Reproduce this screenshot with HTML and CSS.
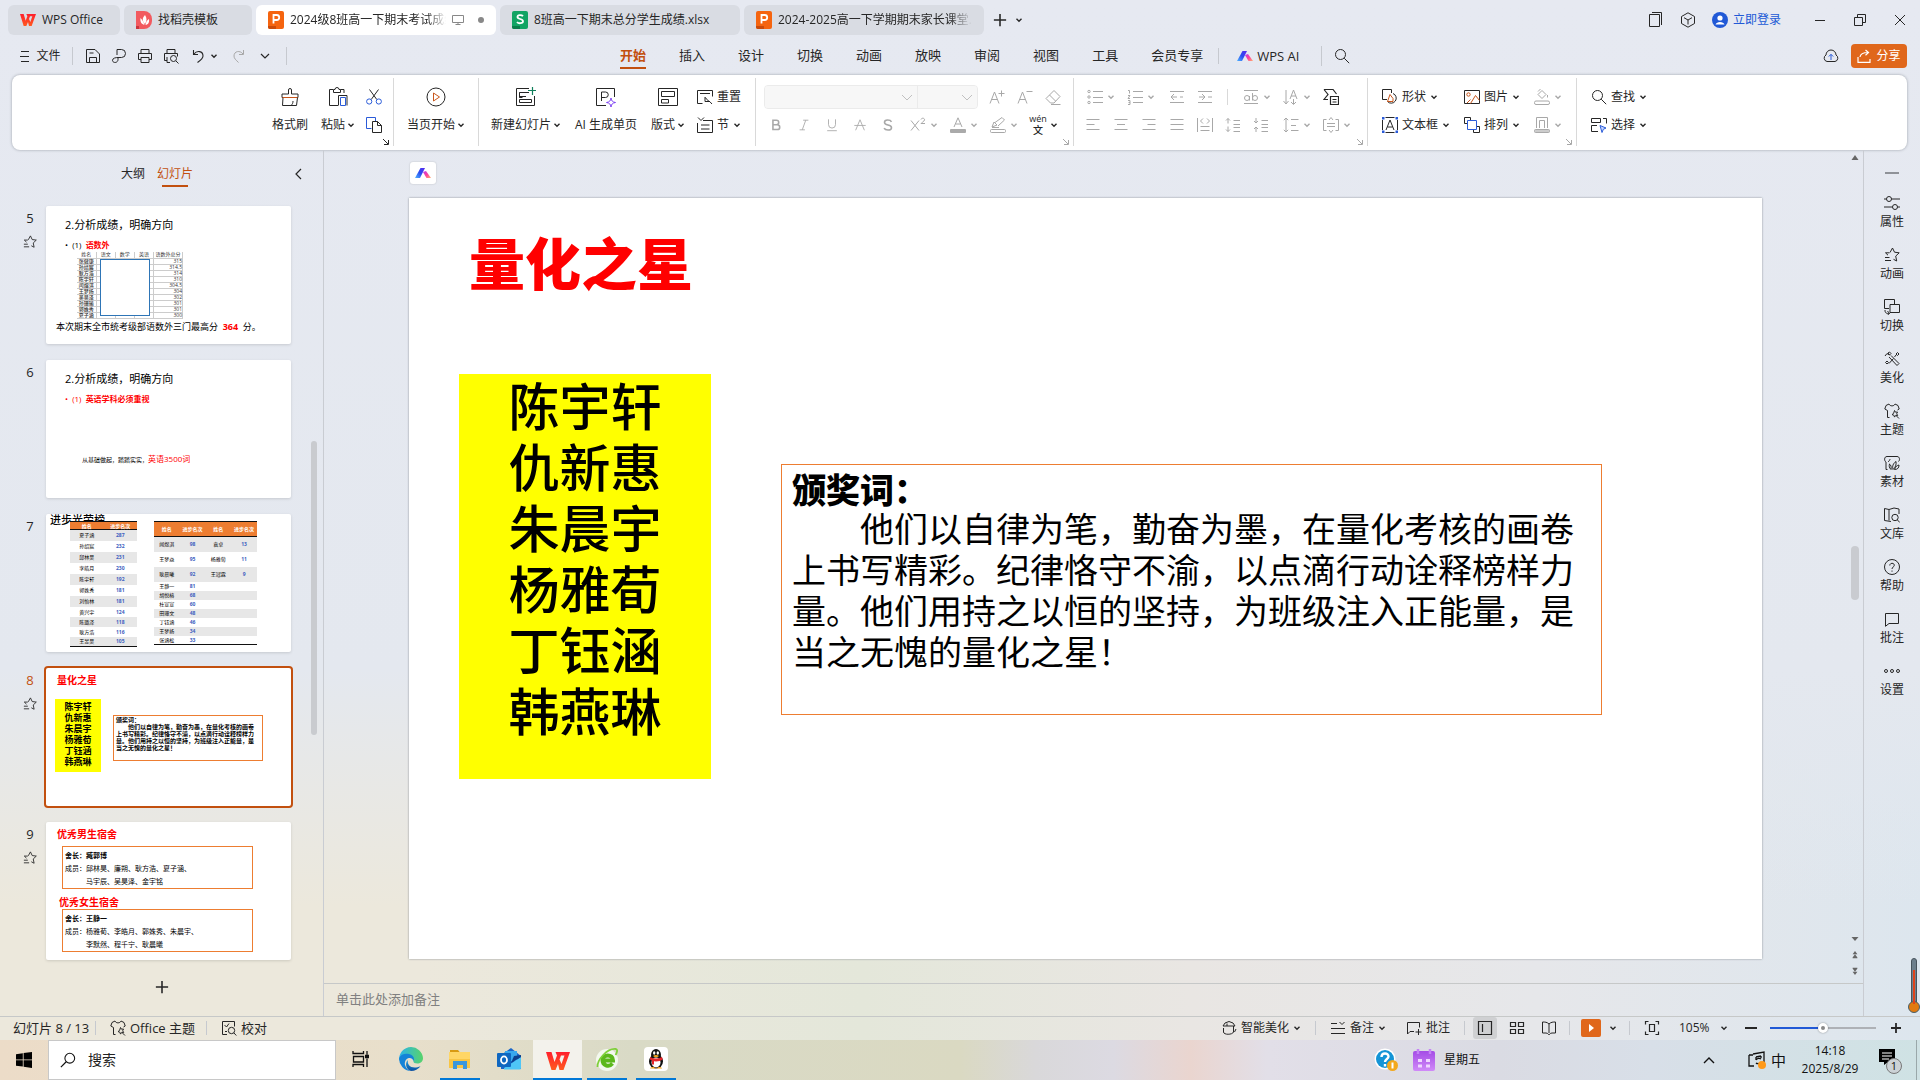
FILE: index.html
```html
<!DOCTYPE html>
<html lang="zh-CN">
<head>
<meta charset="utf-8">
<title>WPS Office</title>
<link rel="stylesheet" href="styles.css">
</head>
<body>
<svg class="sprite" aria-hidden="true">
  <defs>
    <linearGradient id="aiBlue" x1="0" y1="1" x2="1" y2="0"><stop offset="0" stop-color="#4fb4ff"/><stop offset=".5" stop-color="#2a4cf0"/><stop offset="1" stop-color="#5a2af0"/></linearGradient>
    <linearGradient id="aiPink" x1="0" y1="0" x2="1" y2="1"><stop offset="0" stop-color="#b23cf5"/><stop offset=".5" stop-color="#ff3f9c"/><stop offset="1" stop-color="#ffb070"/></linearGradient>
    <linearGradient id="wpsRed" x1="0" y1="0" x2="0" y2="1"><stop offset="0" stop-color="#ff1f2c"/><stop offset="1" stop-color="#ff5a1f"/></linearGradient>
    <linearGradient id="edgeBlue" x1="0" y1="0" x2="0" y2="1"><stop offset="0" stop-color="#1b9de2"/><stop offset="1" stop-color="#0c4fa0"/></linearGradient>
    <linearGradient id="edgeTeal" x1="0" y1="0" x2="1" y2="0"><stop offset="0" stop-color="#2bb3ea"/><stop offset="1" stop-color="#58d36a"/></linearGradient>
    <linearGradient id="calPurple" x1="0" y1="0" x2="0" y2="1"><stop offset="0" stop-color="#a44ce6"/><stop offset="1" stop-color="#d08af8"/></linearGradient>
  </defs>
  <symbol id="chev" viewBox="0 0 8 8"><path d="M1.500 2.800 4 5.200 6.500 2.800" stroke-width="1.400"/></symbol>
  <symbol id="chevL" viewBox="0 0 10 10"><path d="M1 3l4 4 4-4" stroke-width="1.200"/></symbol>
  <symbol id="launch" viewBox="0 0 8 8"><path d="M1 1l5 5M6.500 2v4.500H2"/></symbol>
  <symbol id="wps" viewBox="0 0 24 20"><path d="M0 1h5.500l3 10L11 4.500 9.500 1H24l-6.500 18h-4L12 13l-2.500 6h-4zM15 4.500l-1.500 4 2 4.500 3-8.500z" fill="url(#wpsRed)" fill-rule="evenodd" stroke="none"/></symbol>
  <symbol id="docer" viewBox="0 0 16 18"><path d="M0 0h8a8 8 0 0 1 8 8v2a8 8 0 0 1-8 8H0z" fill="#f25a5f" stroke="none"/><path d="M0 15h3v3H0z" fill="#c9353d" stroke="none"/><path d="M9 4c-3 3-3 6 0 9 2-3 2-6 0-9zM4.500 7c-.5 4 1 6 4 7-1-3-2-5-4-7zM13 8c-2 1-3 3-3.500 6 3-.5 4-3 3.500-6z" fill="#fff" stroke="none"/></symbol>
  <symbol id="ppt" viewBox="0 0 16 18"><rect width="16" height="18" rx="2" fill="#f5640f" stroke="none"/><path d="M0 15h8v3H2a2 2 0 0 1-2-2z" fill="#c94a0a" stroke="none"/><path d="M5.500 12.500V4h3.200a2.400 2.400 0 0 1 0 5H5.500" stroke="#fff" stroke-width="1.800"/></symbol>
  <symbol id="xls" viewBox="0 0 16 18"><rect width="16" height="18" rx="2" fill="#12a464" stroke="none"/><path d="M0 15h8v3H2a2 2 0 0 1-2-2z" fill="#0a7d4a" stroke="none"/><path d="M11 5.200C9.500 3.600 5.500 3.700 5.500 6c0 2.500 5.500 1.500 5.500 4.200 0 2.500-4.500 2.600-6 .8" stroke="#fff" stroke-width="1.800"/></symbol>
  <symbol id="screen" viewBox="0 0 12 12"><path d="M.5 1.500h11v7H.5zM3.500 10.500h5M6 8.500v2"/></symbol>
  <symbol id="plus" viewBox="0 0 16 16"><path d="M8 1v14M1 8h14" stroke-width="1.800"/></symbol>
  <symbol id="windows" viewBox="0 0 16 16"><path d="M1.500 2.500h10v12h-10zM4 .5h9.500V13"/></symbol>
  <symbol id="cube" viewBox="0 0 16 16"><path d="M8 .8l6.500 3.700v7L8 15.200 1.500 11.500v-7zM4 5.700l4 2.300 4-2.300M8 8v4.500"/></symbol>
  <symbol id="user" viewBox="0 0 16 16"><circle cx="8" cy="8" r="8" fill="#2159d6" stroke="none"/><circle cx="8" cy="6" r="2.600" fill="#fff" stroke="none"/><path d="M3.500 12.500C4.500 9 11.500 9 12.500 12.500z" fill="#fff" stroke="none"/></symbol>
  <symbol id="min" viewBox="0 0 12 12"><path d="M1 6.500h10"/></symbol>
  <symbol id="restore" viewBox="0 0 12 12"><path d="M.5 3.500h8v8h-8zM3.500 3V.5h8v8H9"/></symbol>
  <symbol id="close" viewBox="0 0 12 12"><path d="M1 1l10 10M11 1L1 11"/></symbol>
  <symbol id="burger" viewBox="0 0 10 12"><path d="M1 1.500h8M0 6.500h9M1 11.500h8"/></symbol>
  <symbol id="save" viewBox="0 0 16 16"><path d="M1.500 1.500h8.500l4.500 4.500v8.500h-13zM4.500 14.500v-5h7v5M4.500 5h4"/></symbol>
  <symbol id="export" viewBox="0 0 16 16"><path d="M6 7V1.500h4.500a4 4 0 0 1 0 8H7c-2 0-5.500.5-5.500 2.800 0 3 5.500 3 5.500-.8V9"/></symbol>
  <symbol id="print" viewBox="0 0 16 16"><path d="M4 5V1.500h8V5M4 11.500H1.500v-6h13v6H12M4 9.500h8v5H4z"/></symbol>
  <symbol id="preview" viewBox="0 0 16 16"><path d="M4 5V1.500h8V5M4 12.500H1.500v-7h13v3M4 9v5.500h3"/><circle cx="10.500" cy="10.500" r="3"/><path d="M13 13l2.500 2.500"/></symbol>
  <symbol id="undo" viewBox="0 0 16 16"><path d="M3.500 2v4.500h4.500M4 6c3-4 9-3 9 2 0 2.500-2 4-5.500 6.500" stroke-width="1.100"/></symbol>
  <symbol id="redo" viewBox="0 0 16 16"><path d="M12.500 2v4.500H8M12 6C9 2 3 3 3 8c0 2.500 2 4 4.500 6.500"/></symbol>
  <symbol id="search" viewBox="0 0 16 16"><circle cx="6.500" cy="6.500" r="5"/><path d="M10.200 10.200l5 5"/></symbol>
  <symbol id="ai" viewBox="0 0 16 12"><path d="M5.500 1h4.500L5 11H0z" fill="url(#aiBlue)" stroke="none"/><path d="M8 5l3-1 5 7h-4.500z" fill="url(#aiPink)" stroke="none"/></symbol>
  <symbol id="cloud" viewBox="0 0 16 16"><path d="M4 13.500a3.500 3.500 0 0 1-1-6.500 5 5 0 0 1 10 0 3.500 3.500 0 0 1-1 6.500z"/><path d="M8 12V6.500M5.800 8.500L8 6.300l2.200 2.200" stroke="#2a5bd8"/></symbol>
  <symbol id="share" viewBox="0 0 14 14"><path d="M1 8v5.300h12V10M3 8c.5-3.500 3-4.500 8-4.500M8.500 1l3 2.600-3 2.600" stroke-width="1.200"/></symbol>
  <symbol id="brush" viewBox="0 0 20 20"><path d="M8.500 7V3a1.500 1.500 0 0 1 3 0v4h6.500v3.500H2V7zM3 10.500L2.500 18.500h14l1-8M13 14c0 2-.5 3-2 4.500"/><path d="M2.500 10.500h15" stroke="#c8561b"/></symbol>
  <symbol id="paste" viewBox="0 0 20 20"><path d="M5 2.500H1.500v16H10M12.500 2.500H16V6M5.500 2.500h1.500a2 2 0 0 1 4 0h1.500v3h-7z"/><path d="M12.500 10.500h5v8h-5z" stroke="#2a5bd8"/><path d="M10.500 18.500V8.500h8.500v10"/></symbol>
  <symbol id="cut" viewBox="0 0 16 16"><path d="M3.500.5l7.300 10M12.500.5L5.200 10.500"/><g stroke="#2a5bd8"><circle cx="3.200" cy="12.500" r="2.600"/><circle cx="12.800" cy="12.500" r="2.600"/></g></symbol>
  <symbol id="copy" viewBox="0 0 16 16"><path d="M5.500 11.500H.5V.5h9V4" stroke="#2a5bd8"/><path d="M6.500 4.500h5l4 4v7h-9zM11.500 4.500v4h4"/></symbol>
  <symbol id="play" viewBox="0 0 20 20"><circle cx="10" cy="10" r="9"/><path d="M7.500 6l6 4-6 4z" stroke="#c8561b"/></symbol>
  <symbol id="newslide" viewBox="0 0 20 20"><path d="M13 1.500H.5v17h18V9M13 5.500H3.500v5h3M3.500 5.500v5M10 9.500H3.500M3.500 12.500h12v3h-12z"/><path d="M16.500 0v8M12 3.500h8" stroke="#12805c" stroke-width="1.200"/></symbol>
  <symbol id="aislide" viewBox="0 0 20 20"><path d="M10 18.500H.5V1.500h18V10M5.500 14V5h4a2.700 2.700 0 0 1 0 5.500h-4"/><path d="M15 11c.5 3 1.500 4 4.500 4.500-3 .5-4 1.500-4.500 4.500-.5-3-1.500-4-4.500-4.500 3-.5 4-1.500 4.500-4.500z" stroke="#7b3ff2"/></symbol>
  <symbol id="layout" viewBox="0 0 20 20"><path d="M.5 1.500h19v17H.5zM3.500 4.500h13v5h-13zM3.500 12.500h7v3.500h-7z"/></symbol>
  <symbol id="reset" viewBox="0 0 16 16"><path d="M5.500 14.500H.5V1.500h15v6M3 4.500h10M8 8v4.500h4.500M8.500 8.500c1 3 4 3 6.500 6.500"/></symbol>
  <symbol id="section" viewBox="0 0 16 16"><path d="M6 3.500h9.500v12H.5V6M1 .5L4 3.500 7 .5M4 8h8.500M4 12h8.500"/></symbol>
  <symbol id="aplus" viewBox="0 0 16 16"><path d="M1 14.500L5.500 3l4.500 11.500M2.500 10.500h6M9.500 4.500h6M12.500 1.500v6"/></symbol>
  <symbol id="aminus" viewBox="0 0 16 16"><path d="M1 14.500L5.500 3l4.500 11.500M2.500 10.500h6M9.500 2.500h6"/></symbol>
  <symbol id="eraser" viewBox="0 0 16 16"><path d="M9 1.500l6 6-6 6.500H5.500L1 9.500zM4.500 6l6 6M6 15.500h9.500"/></symbol>
  <symbol id="bold" viewBox="0 0 16 16"><path d="M4.500 2.500h4a2.600 2.600 0 0 1 0 5.200h-4zM4.500 7.700h5a2.700 2.700 0 0 1 0 5.500h-5z" stroke-width="1.800"/></symbol>
  <symbol id="italic" viewBox="0 0 16 16"><path d="M7 2.500h6M3 13.500h6M10 2.500L6 13.500"/></symbol>
  <symbol id="under" viewBox="0 0 16 16"><path d="M4 1.500v6a4 4 0 0 0 8 0v-6M2.500 14.500h11"/></symbol>
  <symbol id="strike" viewBox="0 0 16 16"><path d="M3 14L8 2l5 12M1.500 8.500h13"/></symbol>
  <symbol id="shadow" viewBox="0 0 16 16"><path d="M12 4.500C10.500 1.500 4 1.500 4 5c0 4 8 2 8 6 0 3.500-7 3.500-8.500.5" stroke-width="1.800"/></symbol>
  <symbol id="sup" viewBox="0 0 16 16"><path d="M1 3.500l8 10M9 3.500l-8 10M11 2.500c.5-2 4-1.500 3.500.5-.3 1.500-3.500 3-3.500 3.500h4"/></symbol>
  <symbol id="fcolor" viewBox="0 0 16 16"><path d="M4 10L8 .8 12 10M5.500 7h5"/><rect x="0" y="12" width="16" height="4" rx="1" fill="#aaa" stroke="none"/></symbol>
  <symbol id="hilite" viewBox="0 0 16 16"><path d="M2 10l2-5 3 3zM5 5.500L12 .5l2.500 2.500L8 9M2 10.500h7"/><rect x=".5" y="12.500" width="15" height="3" rx="1"/></symbol>
  <symbol id="bullets" viewBox="0 0 16 16"><circle cx="2" cy="2.500" r="1.200"/><circle cx="2" cy="8" r="1.200"/><circle cx="2" cy="13.500" r="1.200"/><path d="M6 2.500h10M6 8.500h10M6 13.500h10"/></symbol>
  <symbol id="numbers" viewBox="0 0 16 16"><path d="M1 1.500h1.500v3M1 6.500h2L1 9.500h2M1 11.500h2v4H1M1.500 13.500H3M6 2.500h10M6 8.500h10M6 13.500h10"/></symbol>
  <symbol id="outdent" viewBox="0 0 14 14"><path d="M0 1.500h14M0 12.500h14M1 7h6M4 4L1 7l3 3M10 7h3"/></symbol>
  <symbol id="indent" viewBox="0 0 14 14"><path d="M0 1.500h14M0 12.500h14M1 7h6M4 4l3 3-3 3M10 7h4"/></symbol>
  <symbol id="abc" viewBox="0 0 16 16"><path d="M1 1.500h14M1 14.500h14M9.500 4v7.500M6.500 7v4.500"/><circle cx="4" cy="9" r="2.500"/><circle cx="12" cy="9" r="2.500"/></symbol>
  <symbol id="vtext" viewBox="0 0 16 16"><path d="M3 1v14M.5 12L3 15l2.500-3M7 10l3.500-9L14 10M8 7h5M10.500 10v5M8 13l2.500 2.500L13 13"/></symbol>
  <symbol id="convert" viewBox="0 0 16 16"><path d="M1 .5h9l3.500 4.500M1 .5l4 5-4 5h4M7.500 7.500h8v8h-8zM9.500 10.500h4M9.500 13h4" stroke-width="1.200"/></symbol>
  <symbol id="alignl" viewBox="0 0 16 16"><path d="M1.500 2.500h13M1.500 7.500h8M1.500 12.500h13"/></symbol>
  <symbol id="alignc" viewBox="0 0 16 16"><path d="M1.500 2.500h13M4 7.500h8M1.500 12.500h13"/></symbol>
  <symbol id="alignr" viewBox="0 0 16 16"><path d="M1.500 2.500h13M6.500 7.500h8M1.500 12.500h13"/></symbol>
  <symbol id="justify" viewBox="0 0 16 16"><path d="M1.500 2.500h13M1.500 7.500h13M1.500 12.500h13"/></symbol>
  <symbol id="distrib" viewBox="0 0 16 16"><path d="M.5 1v14M15.500 1v14M6 1.500L3.500 4 6 6.500M10 1.500L12.500 4 10 6.500M3.500 9.500h9M3.500 13.500h9"/></symbol>
  <symbol id="lsup" viewBox="0 0 16 16"><path d="M3 6.500v-5M1 3.500l2-2 2 2M3 9.500v5M1 12.500l2 2 2-2M8.500 3.500H15M8.500 7.500H15M8.500 10.500H15M8.500 14.500H15"/></symbol>
  <symbol id="lsdown" viewBox="0 0 16 16"><path d="M3 1v5M1 4l2 2 2-2M3 15v-5M1 12l2-2 2 2M8.500 3.500H15M8.500 7.500H15M8.500 10.500H15M8.500 14.500H15"/></symbol>
  <symbol id="lspace" viewBox="0 0 16 16"><path d="M3 1v14M.8 3.200L3 1l2.200 2.200M.8 12.800L3 15l2.200-2.200M8 2.500h7.500M8 8.500h5M8 13.500h7.500"/></symbol>
  <symbol id="valign" viewBox="0 0 16 16"><path d="M3.500 2.500h-3v11h3M12.500 2.500h3v11h-3M4 6.500h8M4 9.500h8M6 3l2-2.500L10 3M6 13l2 2.500 2-2.500"/></symbol>
  <symbol id="shapes" viewBox="0 0 16 16"><path d="M5 10.500H.5V.5h9V4M11 4.500a5 5 0 1 1-5.500 8"/><path d="M5.500 12.500l2.500-7 3 4v3z" stroke="#c8561b"/></symbol>
  <symbol id="textbox" viewBox="0 0 16 16"><path d="M3.500.5h9M3.500 15.500h9M.5 3v10M15.500 3v10M4 13L8 3l4 10M5.500 10h5"/><path d="M0 0h2.500v2.500H0zM13.500 0H16v2.500h-2.500zM0 13.500h2.500V16H0zM13.500 13.500H16V16h-2.500z" fill="#2a5bd8" stroke="none"/></symbol>
  <symbol id="picture" viewBox="0 0 16 16"><path d="M.5 1.500h15v13H.5z"/><g stroke="#c8561b"><circle cx="4.500" cy="5.500" r="1.700"/><path d="M3 14l3.500-3.500M6.500 14.500l5-8 4 5"/></g></symbol>
  <symbol id="arrange" viewBox="0 0 16 16"><path d="M3 6.500H.5V.5h6V3M13 9.500h2.500v6h-6V13"/><path d="M3.500 3.500h9v9h-9z" stroke="#2a5bd8"/></symbol>
  <symbol id="fill" viewBox="0 0 16 16"><path d="M4 5.500L8 1.500l4 4-4 4zM4 2.500L6.500 0M13.500 6v2.500"/><rect x=".5" y="12" width="15" height="3.500" rx="1.500"/></symbol>
  <symbol id="frame" viewBox="0 0 16 16"><path d="M2.500 11V.5h11V11M5.500 11V3.500h5V11"/><rect x=".5" y="12.500" width="15" height="3" rx="1" fill="#ccc" stroke="#aaa"/></symbol>
  <symbol id="select" viewBox="0 0 16 16"><path d="M.5 1.500h9v4h-9zM12 1.500h3.500v5M6 8.500H.5v6H7"/><path d="M9 8.500l6 2.500-2.700 1.300L11 15.500z" stroke="#2a5bd8" fill="#c9d8ff"/></symbol>
  <symbol id="star" viewBox="0 0 16 16"><path d="M6 5.500L8.500 1l2 4.200 4.700.6-3.500 3.300 1 4.900-3.200-1.700M1.500 5.800h4M1.500 5.800L4 8.200M1 10.500h4.500M1 13.500h6"/></symbol>
  <symbol id="props" viewBox="0 0 16 16"><circle cx="5" cy="4" r="2.500"/><circle cx="11" cy="12" r="2.500"/><path d="M0 4h2.500M7.500 4H16M0 12h8.500M13.500 12H16"/></symbol>
  <symbol id="swap" viewBox="0 0 16 16"><path d="M5 9.500H.5V.5h10V5M6 5.500h9.500v8H6zM1 11c0 3 1 3.500 4.500 3.500M3.500 12l2 2.500-2 1.500"/></symbol>
  <symbol id="beauty" viewBox="0 0 16 16"><path d="M5 6l8 8.500 2-2L7 4.500M9.500 7.500L5 12.500M12 4l-1.500 2M1 5l2-2.500L5.500 4M1.500 11.500L3 10l1.500 1.500L3 13zM12 3l1.500-1.500L15 3l-1.500 1.500zM4 2l1.500-1L7 2.500 5.500 4z"/></symbol>
  <symbol id="theme" viewBox="0 0 16 16"><path d="M5.500 14.500H3.500V7.500L.8 6 2 2.500 5 1c1 2.500 5 2.500 6 0l3 1.500L15.200 6l-1.700 1"/><path d="M10.500 7.500l1 1.700 2-.2-.8 1.800 1 1.700-2-.1-1.200 1.700-.6-1.900-1.900-.6 1.600-1.200zM12.500 13l2.500 2.500"/></symbol>
  <symbol id="asset" viewBox="0 0 16 16"><path d="M3.500 14.500H2V7C0 6 0 1.500 3 1.500h10c3 0 3 4 1.500 5M4 7c1-1 2-2 2-3M7 14.500c-2-2-2-3.500-1.500-5.500 1.500 1 2 3 1.500 5.500zM9 14.500c-1-3 0-6 3-8 .5 3-.5 6-3 8zM10.500 14.500c1-3 2.500-4 4.500-4.500 0 3-1.500 4.500-4.500 4.500z"/></symbol>
  <symbol id="library" viewBox="0 0 16 16"><path d="M7 14.500l-6.500-1v-12L5 2.500v11M5 2.500l5-1.500 5 1v5"/><circle cx="11" cy="10.500" r="3.200"/><path d="M13.300 12.800l2.500 2.700"/></symbol>
  <symbol id="help" viewBox="0 0 16 16"><circle cx="8" cy="8" r="7.500"/><path d="M5.800 6.500c0-3 4.500-2.800 4.500-.3C10.300 8 8 8 8 10M8 11.500v1.200"/></symbol>
  <symbol id="comment" viewBox="0 0 16 16"><path d="M1.500 2.500h13v10H5l-3.500 2.800z"/></symbol>
  <symbol id="dots" viewBox="0 0 16 16"><circle cx="2" cy="8" r="1.500"/><circle cx="8" cy="8" r="1.500"/><circle cx="14" cy="8" r="1.500"/></symbol>
  <symbol id="proof" viewBox="0 0 16 16"><path d="M6 14.500H1.500V1.500h12v5M3.500 5l2 2 2.500-3.500M4 11.500h2"/><circle cx="10.500" cy="10.500" r="3.200"/><path d="M12.800 12.800l2.500 2.700"/></symbol>
  <symbol id="smart" viewBox="0 0 16 16"><path d="M2 6l2-3 4-1.500L12 3l2 3zM2.500 8v4c0 3 9 3 10 0V6M13.500 12L15 9M6 6V3.500"/></symbol>
  <symbol id="notes" viewBox="0 0 16 16"><path d="M1 3.500h6M9.500 2l2.500 2.500L14.500 2M1 8.500h14M1 13.500h14"/></symbol>
  <symbol id="addcom" viewBox="0 0 16 16"><path d="M8 11.500H4l-2.500 2.500V2.500h12v5M12.500 9v6M9.500 12h6"/></symbol>
  <symbol id="normal" viewBox="0 0 16 16"><path d="M1.500 1.500h13v13h-13zM5.500 4v8" stroke-width="1.200"/></symbol>
  <symbol id="grid" viewBox="0 0 16 16"><path d="M1.500 2.500h5v4h-5zM9.500 2.500h5v4h-5zM1.500 9.500h5v4h-5zM9.500 9.500h5v4h-5z" stroke-width="1.200"/></symbol>
  <symbol id="read" viewBox="0 0 16 16"><path d="M8 4C6 2 4 2 1.500 2v11H5c2 0 3 2 3 2s1-2 3-2h3.500V2C12 2 10 2 8 4zM8 4v9"/></symbol>
  <symbol id="fit" viewBox="0 0 16 16"><path d="M4.500 1.500h-3v3M11.500 1.500h3v3M4.500 14.500h-3v-3M11.500 14.500h3v-3M5.500 4.500h5v7h-5z" stroke-width="1.200"/></symbol>
</svg>

<div class="app">
  <header class="titlebar">
    <div class="doc-tabs" role="tablist">
      <button class="doc-tab tab-home"><svg class="ic logo"><use href="#wps"/></svg><span>WPS Office</span></button>
      <button class="doc-tab tab-tpl"><svg class="ic"><use href="#docer"/></svg><span>找稻壳模板</span></button>
      <button class="doc-tab tab-doc active"><svg class="ic"><use href="#ppt"/></svg><span class="fade">2024级8班高一下期末考试成绩</span><svg class="ic s12 mute"><use href="#screen"/></svg><i class="dot"></i></button>
      <button class="doc-tab tab-doc"><svg class="ic"><use href="#xls"/></svg><span>8班高一下期末总分学生成绩.xlsx</span></button>
      <button class="doc-tab tab-doc"><svg class="ic"><use href="#ppt"/></svg><span class="fade long">2024-2025高一下学期期末家长课堂.</span></button>
    </div>
    <button class="plain new-tab" aria-label="新建"><svg class="ic s14"><use href="#plus"/></svg></button>
    <button class="plain" aria-label="更多"><svg class="ic s8"><use href="#chev"/></svg></button>
    <div class="win">
      <button class="plain" aria-label="窗口"><svg class="ic s16"><use href="#windows"/></svg></button>
      <button class="plain" aria-label="应用"><svg class="ic s16"><use href="#cube"/></svg></button>
      <button class="plain login"><svg class="ic s16"><use href="#user"/></svg><span>立即登录</span></button>
      <button class="plain winbtn" aria-label="最小化"><svg class="ic s12"><use href="#min"/></svg></button>
      <button class="plain winbtn" aria-label="还原"><svg class="ic s12"><use href="#restore"/></svg></button>
      <button class="plain winbtn" aria-label="关闭"><svg class="ic s12"><use href="#close"/></svg></button>
    </div>
  </header>

  <div class="menubar">
    <div class="quick">
      <button class="plain file"><svg class="ic burger"><use href="#burger"/></svg><span>文件</span></button>
      <i class="vsep"></i>
      <button class="plain q" aria-label="保存"><svg class="ic s16"><use href="#save"/></svg></button>
      <button class="plain q" aria-label="输出"><svg class="ic s16"><use href="#export"/></svg></button>
      <button class="plain q" aria-label="打印"><svg class="ic s16"><use href="#print"/></svg></button>
      <button class="plain q" aria-label="预览"><svg class="ic s16"><use href="#preview"/></svg></button>
      <button class="plain undo" aria-label="撤销"><svg class="ic s16"><use href="#undo"/></svg><svg class="ic s8"><use href="#chev"/></svg></button>
      <button class="plain q gray redo" aria-label="恢复"><svg class="ic s16"><use href="#redo"/></svg></button>
      <button class="plain q" aria-label="自定义"><svg class="ic s10"><use href="#chevL"/></svg></button>
      <i class="vsep last"></i>
    </div>
    <nav class="menu-tabs">
      <a href="#" class="on">开始</a><a href="#">插入</a><a href="#">设计</a><a href="#">切换</a><a href="#">动画</a><a href="#">放映</a><a href="#">审阅</a><a href="#">视图</a><a href="#">工具</a><a href="#">会员专享</a>
    </nav>
    <i class="vsep a"></i>
    <button class="plain wpsai"><svg class="ic ai"><use href="#ai"/></svg><span>WPS AI</span></button>
    <i class="vsep b"></i>
    <button class="plain" aria-label="搜索"><svg class="ic s16"><use href="#search"/></svg></button>
    <div class="menu-right">
      <button class="plain" aria-label="云同步"><svg class="ic s16"><use href="#cloud"/></svg></button>
      <button class="share"><svg class="ic s14"><use href="#share"/></svg><span>分享</span></button>
    </div>
  </div>

  <div class="ribbon">
    <section class="grp g-clip">
      <button class="big w48"><svg class="ic s20"><use href="#brush"/></svg><span>格式刷</span></button>
      <button class="big w48"><svg class="ic s20"><use href="#paste"/></svg><span>粘贴<svg class="ic s8"><use href="#chev"/></svg></span></button>
      <div class="col w24">
        <button class="tool" aria-label="剪切"><svg class="ic s16"><use href="#cut"/></svg></button>
        <button class="tool" aria-label="复制"><svg class="ic s16"><use href="#copy"/></svg></button>
      </div>
      <svg class="ic s8 launcher"><use href="#launch"/></svg>
    </section>
    <section class="grp g-play">
      <button class="big"><svg class="ic s20"><use href="#play"/></svg><span>当页开始<svg class="ic s8"><use href="#chev"/></svg></span></button>
    </section>
    <section class="grp g-slide">
      <button class="big w78"><svg class="ic s20"><use href="#newslide"/></svg><span>新建幻灯片<svg class="ic s8"><use href="#chev"/></svg></span></button>
      <button class="big w78"><svg class="ic s20"><use href="#aislide"/></svg><span>AI 生成单页</span></button>
      <button class="big w42"><svg class="ic s20"><use href="#layout"/></svg><span>版式<svg class="ic s8"><use href="#chev"/></svg></span></button>
      <div class="col side">
        <button class="lab"><svg class="ic s16"><use href="#reset"/></svg><span>重置</span></button>
        <button class="lab"><svg class="ic s16"><use href="#section"/></svg><span>节</span><svg class="ic s8"><use href="#chev"/></svg></button>
      </div>
    </section>
    <section class="grp g-font gray">
      <div class="row">
        <div class="combo"><select class="c-font" aria-label="字体" disabled><option></option></select><select class="c-size" aria-label="字号" disabled><option></option></select></div>
        <button class="tool" aria-label="增大字号"><svg class="ic s16"><use href="#aplus"/></svg></button>
        <button class="tool" aria-label="减小字号"><svg class="ic s16"><use href="#aminus"/></svg></button>
        <button class="tool" aria-label="清除格式"><svg class="ic s16"><use href="#eraser"/></svg></button>
      </div>
      <div class="row">
        <button class="tool" aria-label="加粗"><svg class="ic s14"><use href="#bold"/></svg></button>
        <button class="tool" aria-label="倾斜"><svg class="ic s14"><use href="#italic"/></svg></button>
        <button class="tool" aria-label="下划线"><svg class="ic s14"><use href="#under"/></svg></button>
        <button class="tool" aria-label="删除线"><svg class="ic s14"><use href="#strike"/></svg></button>
        <button class="tool" aria-label="阴影"><svg class="ic s14"><use href="#shadow"/></svg></button>
        <button class="drop" aria-label="上标"><svg class="ic s16"><use href="#sup"/></svg><svg class="ic s8"><use href="#chev"/></svg></button>
        <button class="drop" aria-label="字体颜色"><svg class="ic s16"><use href="#fcolor"/></svg><svg class="ic s8"><use href="#chev"/></svg></button>
        <button class="drop" aria-label="突出显示"><svg class="ic s16"><use href="#hilite"/></svg><svg class="ic s8"><use href="#chev"/></svg></button>
        <button class="drop dark"><span class="pinyin"><span>wén</span><b>文</b></span><svg class="ic s8"><use href="#chev"/></svg></button>
      </div>
      <svg class="ic s8 launcher"><use href="#launch"/></svg>
    </section>
    <section class="grp g-para gray">
      <div class="row">
        <button class="drop" aria-label="项目符号"><svg class="ic s16"><use href="#bullets"/></svg><svg class="ic s8"><use href="#chev"/></svg></button>
        <button class="drop numbering" aria-label="编号"><svg class="ic s16"><use href="#numbers"/></svg><svg class="ic s8"><use href="#chev"/></svg></button>
        <button class="tool" aria-label="减少缩进"><svg class="ic s14"><use href="#outdent"/></svg></button>
        <button class="tool" aria-label="增加缩进"><svg class="ic s14"><use href="#indent"/></svg></button>
        <i class="vsep"></i>
        <button class="drop" aria-label="对齐文本"><svg class="ic s16"><use href="#abc"/></svg><svg class="ic s8"><use href="#chev"/></svg></button>
        <button class="drop" aria-label="文字方向"><svg class="ic s16"><use href="#vtext"/></svg><svg class="ic s8"><use href="#chev"/></svg></button>
        <button class="tool conv dark" aria-label="转智能图形"><svg class="ic s16"><use href="#convert"/></svg></button>
      </div>
      <div class="row">
        <button class="tool" aria-label="左对齐"><svg class="ic s16"><use href="#alignl"/></svg></button>
        <button class="tool" aria-label="居中"><svg class="ic s16"><use href="#alignc"/></svg></button>
        <button class="tool" aria-label="右对齐"><svg class="ic s16"><use href="#alignr"/></svg></button>
        <button class="tool" aria-label="两端对齐"><svg class="ic s16"><use href="#justify"/></svg></button>
        <button class="tool" aria-label="分散对齐"><svg class="ic s16"><use href="#distrib"/></svg></button>
        <button class="tool" aria-label="增大行距"><svg class="ic s16"><use href="#lsup"/></svg></button>
        <button class="tool" aria-label="减小行距"><svg class="ic s16"><use href="#lsdown"/></svg></button>
        <button class="drop" aria-label="行距"><svg class="ic s16"><use href="#lspace"/></svg><svg class="ic s8"><use href="#chev"/></svg></button>
        <button class="drop" aria-label="垂直对齐"><svg class="ic s16"><use href="#valign"/></svg><svg class="ic s8"><use href="#chev"/></svg></button>
      </div>
      <svg class="ic s8 launcher"><use href="#launch"/></svg>
    </section>
    <section class="grp g-draw">
      <button class="lab"><svg class="ic s16"><use href="#shapes"/></svg><span>形状</span><svg class="ic s8"><use href="#chev"/></svg></button>
      <button class="lab"><svg class="ic s16"><use href="#picture"/></svg><span>图片</span><svg class="ic s8"><use href="#chev"/></svg></button>
      <button class="drop gray" aria-label="填充"><svg class="ic s16"><use href="#fill"/></svg><svg class="ic s8"><use href="#chev"/></svg></button>
      <button class="lab"><svg class="ic s16"><use href="#textbox"/></svg><span>文本框</span><svg class="ic s8"><use href="#chev"/></svg></button>
      <button class="lab"><svg class="ic s16"><use href="#arrange"/></svg><span>排列</span><svg class="ic s8"><use href="#chev"/></svg></button>
      <button class="drop gray" aria-label="轮廓"><svg class="ic s16"><use href="#frame"/></svg><svg class="ic s8"><use href="#chev"/></svg></button>
      <svg class="ic s8 launcher gray"><use href="#launch"/></svg>
    </section>
    <section class="grp g-find">
      <button class="lab"><svg class="ic s16"><use href="#search"/></svg><span>查找</span><svg class="ic s8"><use href="#chev"/></svg></button>
      <button class="lab"><svg class="ic s16"><use href="#select"/></svg><span>选择</span><svg class="ic s8"><use href="#chev"/></svg></button>
    </section>
  </div>

  <main class="work">
    <aside class="outline">
      <div class="outline-head">
        <a href="#">大纲</a><a href="#" class="on">幻灯片</a>
        <button class="plain collapse" aria-label="收起"><svg class="ic s12" viewBox="0 0 12 12"><path d="M8 1L3 6l5 5" stroke-width="1.200"/></svg></button>
      </div>
      <ol class="thumbs">
        <li>
          <div class="num"><span>5</span><svg class="ic s14"><use href="#star"/></svg></div>
          <div class="thumb">
            <p class="t-head">2.分析成绩，明确方向</p>
            <p class="t-sub">•&nbsp; (1)&nbsp; <b>语数外</b></p>
            <table class="t-score">
              <tr><th>姓名</th><th>语文</th><th>数学</th><th>英语</th><th>语数外总分</th></tr>
              <tr><td>张健康</td><td></td><td></td><td></td><td>315</td></tr>
              <tr><td>孙靖宸</td><td></td><td></td><td></td><td>314.5</td></tr>
              <tr><td>耿方浩</td><td></td><td></td><td></td><td>314</td></tr>
              <tr><td>陈宇轩</td><td></td><td></td><td></td><td>310</td></tr>
              <tr><td>闫煜淇</td><td></td><td></td><td></td><td>304.5</td></tr>
              <tr><td>王梦扬</td><td></td><td></td><td></td><td>304</td></tr>
              <tr><td>吴昊泽</td><td></td><td></td><td></td><td>302</td></tr>
              <tr><td>孙珊瑜</td><td></td><td></td><td></td><td>301</td></tr>
              <tr><td>郭姝秀</td><td></td><td></td><td></td><td>301</td></tr>
              <tr><td>夏子涵</td><td></td><td></td><td></td><td>300</td></tr>
            </table>
            <div class="t-cover"></div>
            <p class="t-foot">本次期末全市统考级部语数外三门最高分&nbsp; <b>364</b>&nbsp; 分。</p>
          </div>
        </li>
        <li>
          <div class="num"><span>6</span></div>
          <div class="thumb">
            <p class="t-head">2.分析成绩，明确方向</p>
            <p class="t-sub red">•&nbsp; (1)&nbsp; <b>英语学科必须重视</b></p>
            <p class="t-mid">从基础做起，踏踏实实，<span>英语3500词</span></p>
          </div>
        </li>
        <li>
          <div class="num"><span>7</span></div>
          <div class="thumb">
            <p class="t-rank">进步光荣榜</p>
            <table class="t-tab left">
              <tr><th>姓名</th><th>进步名次</th></tr>
              <tr><td>夏子涵</td><td>287</td></tr><tr><td>孙绍宸</td><td>232</td></tr><tr><td>邱林昊</td><td>231</td></tr><tr><td>李皓月</td><td>230</td></tr><tr><td>陈宇轩</td><td>192</td></tr><tr><td>郭姝秀</td><td>181</td></tr><tr><td>刘怡林</td><td>181</td></tr><tr><td>黄兴宇</td><td>124</td></tr><tr><td>陈璐泽</td><td>118</td></tr><tr><td>耿方浩</td><td>116</td></tr><tr><td>王昱昊</td><td>105</td></tr>
            </table>
            <table class="t-tab right">
              <tr class="tall"><th>姓名</th><th>进步名次</th><th>姓名</th><th>进步名次</th></tr>
              <tr class="tall"><td>闻煜淇</td><td>98</td><td>袁卓</td><td>13</td></tr>
              <tr class="tall"><td>王梦焱</td><td>95</td><td>杨雅荀</td><td>11</td></tr>
              <tr class="tall"><td>耿晨曦</td><td>92</td><td>王冠霖</td><td>9</td></tr>
              <tr><td>王静一</td><td>81</td><td></td><td></td></tr><tr><td>胡悦榕</td><td>68</td><td></td><td></td></tr><tr><td>杜宣宣</td><td>60</td><td></td><td></td></tr><tr><td>田珊文</td><td>48</td><td></td><td></td></tr><tr><td>丁钰涵</td><td>46</td><td></td><td></td></tr><tr><td>王梦扬</td><td>34</td><td></td><td></td></tr><tr><td>张涵松</td><td>33</td><td></td><td></td></tr>
            </table>
          </div>
        </li>
        <li class="current">
          <div class="num"><span>8</span><svg class="ic s14"><use href="#star"/></svg></div>
          <div class="thumb">
            <p class="t-title">量化之星</p>
            <p class="t-names">陈宇轩<br>仇新惠<br>朱晨宇<br>杨雅荀<br>丁钰涵<br>韩燕琳</p>
            <div class="t-award"><b>颁奖词：</b><p>他们以自律为笔，勤奋为墨，在量化考核的画卷上书写精彩。纪律恪守不渝，以点滴行动诠释榜样力量。他们用持之以恒的坚持，为班级注入正能量，是当之无愧的量化之星！</p></div>
          </div>
        </li>
        <li>
          <div class="num"><span>9</span><svg class="ic s14"><use href="#star"/></svg></div>
          <div class="thumb dorms">
            <p class="t-title boys">优秀男生宿舍</p>
            <p class="t-dorm boys"><b>舍长：臧郭博</b><br>成员：邱林昊、廉朔、耿方浩、夏子涵、<br>　　　马宇辰、吴昊泽、金宇铭</p>
            <p class="t-title girls">优秀女生宿舍</p>
            <p class="t-dorm girls"><b>舍长：王静一</b><br>成员：杨雅荀、李皓月、郭姝秀、朱晨宇、<br>　　　李默然、程千宁、耿晨曦</p>
          </div>
        </li>
      </ol>
      <button class="plain add" aria-label="新建幻灯片"><svg class="ic s14"><use href="#plus"/></svg></button>
      <i class="bar"></i>
    </aside>

    <section class="editor">
      <div class="stage">
        <button class="aibtn" aria-label="AI"><svg class="ic ai"><use href="#ai"/></svg></button>
        <article class="slide">
          <h1>量化之星</h1>
          <p class="names">陈宇轩<br>仇新惠<br>朱晨宇<br>杨雅荀<br>丁钰涵<br>韩燕琳</p>
          <div class="award">
            <h2>颁奖词：</h2>
            <p>他们以自律为笔，勤奋为墨，在量化考核的画卷上书写精彩。纪律恪守不渝，以点滴行动诠释榜样力量。他们用持之以恒的坚持，为班级注入正能量，是当之无愧的量化之星！</p>
          </div>
        </article>
        <div class="vscroll">
          <svg class="tri" viewBox="0 0 8 8"><path d="M4 1l3.500 5h-7z"/></svg>
          <div class="track"><i></i></div>
          <div class="steps">
            <svg class="tri" viewBox="0 0 8 8"><path d="M4 6L.5 2h7z"/></svg>
            <svg class="tri" viewBox="0 0 8 10"><path d="M4 0l3 4H1zM4 4l3 4H1zM1 8h6v1H1z"/></svg>
            <svg class="tri" viewBox="0 0 8 10"><path d="M1 1h6v1H1zM4 6l3-4H1zM4 10l3-4H1z"/></svg>
          </div>
        </div>
      </div>
      <input class="notes" aria-label="备注" placeholder="单击此处添加备注">
    </section>

    <aside class="rail">
      <i class="dash"></i>
      <button><svg class="ic s16"><use href="#props"/></svg><span>属性</span></button>
      <button><svg class="ic s16"><use href="#star"/></svg><span>动画</span></button>
      <button><svg class="ic s16"><use href="#swap"/></svg><span>切换</span></button>
      <button><svg class="ic s16"><use href="#beauty"/></svg><span>美化</span></button>
      <button><svg class="ic s16"><use href="#theme"/></svg><span>主题</span></button>
      <button><svg class="ic s16"><use href="#asset"/></svg><span>素材</span></button>
      <button><svg class="ic s16"><use href="#library"/></svg><span>文库</span></button>
      <button><svg class="ic s16"><use href="#help"/></svg><span>帮助</span></button>
      <button><svg class="ic s16"><use href="#comment"/></svg><span>批注</span></button>
      <button><svg class="ic s16"><use href="#dots"/></svg><span>设置</span></button>
      <svg class="thermo" viewBox="0 0 12 56"><rect x="3.500" y=".5" width="5" height="46" rx="2.500" fill="#6d7f8c" stroke="#47535c"/><circle cx="6" cy="49" r="5.500" fill="#e07a10" stroke="#47606c"/><path d="M6 12v34" stroke="#e0431a" stroke-width="2"/></svg>
    </aside>
  </main>

  <footer class="status">
    <span class="pages">幻灯片 8 / 13</span>
    <i class="vsep"></i>
    <button class="lab th"><svg class="ic s16"><use href="#theme"/></svg><span>Office 主题</span></button>
    <i class="vsep"></i>
    <button class="lab pr"><svg class="ic s16"><use href="#proof"/></svg><span>校对</span></button>
    <div class="status-right">
      <button class="lab"><svg class="ic s16"><use href="#smart"/></svg><span>智能美化</span><svg class="ic s8"><use href="#chev"/></svg></button>
      <i class="vsep"></i>
      <button class="lab"><svg class="ic s16"><use href="#notes"/></svg><span>备注</span><svg class="ic s8"><use href="#chev"/></svg></button>
      <button class="lab com"><svg class="ic s16"><use href="#addcom"/></svg><span>批注</span></button>
      <i class="vsep v2"></i>
      <button class="view on" aria-label="普通视图"><svg class="ic s16"><use href="#normal"/></svg></button>
      <button class="view" aria-label="浏览视图"><svg class="ic s16"><use href="#grid"/></svg></button>
      <button class="view" aria-label="阅读视图"><svg class="ic s16"><use href="#read"/></svg></button>
      <i class="vsep v3"></i>
      <button class="playbtn" aria-label="放映"><svg viewBox="0 0 20 18"><path d="M8 5l5 4-5 4z" fill="#fff"/></svg></button>
      <svg class="ic s8"><use href="#chev"/></svg>
      <i class="vsep v4"></i>
      <svg class="ic s16"><use href="#fit"/></svg>
      <label class="pct" for="zoom">105%</label>
      <svg class="ic s8"><use href="#chev"/></svg>
      <button class="plain zb" aria-label="缩小"><svg class="ic s14"><path d="M1 7h12" stroke-width="2"/></svg></button>
      <input id="zoom" type="range" min="0" max="100" value="50">
      <button class="plain zb" aria-label="放大"><svg class="ic s14"><path d="M2 7h10M7 2v10" stroke-width="1.800"/></svg></button>
    </div>
  </footer>

  <div class="taskbar">
    <button class="plain start" aria-label="开始"><svg viewBox="0 0 16 16"><path d="M0 2.200l6.800-1v6.300H0zM7.600 1.100L16 0v7.500H7.600zM0 8.300h6.800v6.300L0 13.700zM7.600 8.300H16V16l-8.400-1.200z"/></svg></button>
    <label class="searchbox"><svg class="ic" viewBox="0 0 18 18"><circle cx="11" cy="7" r="5.500" stroke-width="1.200"/><path d="M7 11L1 17" stroke-width="1.400"/></svg><input aria-label="搜索" placeholder="搜索"></label>
    <button class="task view-task" aria-label="任务视图"><svg class="ic s18" viewBox="0 0 18 18"><path d="M1 1v2.500h10.500V1M1.500 6.500h10v5.500h-10zM1 17v-2.500h10.500V17M15 1v3.500M15 9v8" stroke-width="1.300"/><path d="M13.500 5h3v3h-3z" fill="#111"/></svg></button>
    <button class="task" aria-label="Edge"><svg viewBox="0 0 24 24"><path d="M12 0a12 12 0 0 1 12 11c0 4-3 5.500-5.500 5.500-3 0-4.500-1-4-2.500C15 12 14 8.500 10 8.500 6 8.500 1.500 11 .3 14A12 12 0 0 1 12 0z" fill="url(#edgeTeal)"/><path d="M.2 11C1.500 7.500 6 6 10 7c4 .8 6 4 4.700 7-1-2.500-3-3.500-5-3-3 1-4.500 4-3.700 7 1 3 3 5.500 6 6A12 12 0 0 1 .2 11z" fill="#1483d8"/><path d="M9 13c-1.500 5 4 10 12.500 6.200A12 12 0 0 1 12 24C7 23 5.500 16 9 13z" fill="url(#edgeBlue)"/></svg></button>
    <button class="task run" aria-label="文件资源管理器"><svg viewBox="0 0 24 24"><path d="M2 3h8l2 2.500H2z" fill="#d89a12"/><path d="M1 5h21v16H1z" fill="#ffd666"/><path d="M1 12h21v9H1z" fill="#f8c545"/><path d="M5 22v-8h14v8h-4v-4H9v4z" fill="#3a97dd"/></svg></button>
    <button class="task" aria-label="Outlook"><svg viewBox="0 0 24 24"><path d="M4 8l10-7 10 8v13H4z" fill="#1b66c9"/><path d="M8 4h12v10H8z" fill="#38a7ee"/><path d="M24 10L7 21v1.500h15.500A1.500 1.500 0 0 0 24 21z" fill="#4fc6f7"/><path d="M24 10L14 16l3-7 7-1z" fill="#0e3f8c"/><rect x="0" y="6" width="14" height="14" rx="1" fill="#0f67c0"/><ellipse cx="7" cy="13" rx="3" ry="3.600" fill="none" stroke="#fff" stroke-width="1.800"/></svg></button>
    <button class="task run here" aria-label="WPS"><svg viewBox="0 -2 24 24"><use href="#wps"/></svg></button>
    <button class="task run" aria-label="浏览器"><svg viewBox="0 0 24 24"><circle cx="12" cy="13" r="11" fill="#f3f8ee"/><path d="M17.500 16.500c-4 4.500-10 1.500-10-3.500 0-6 10.500-6.500 10.500.5H8" fill="none" stroke="#5cb81c" stroke-width="4"/><path d="M2.500 20C2 13 12 1 21 2c2 .5 1 4-.5 6" fill="none" stroke="#7fd03a" stroke-width="1.800"/></svg></button>
    <button class="task run" aria-label="QQ"><svg viewBox="0 0 24 24"><rect width="24" height="24" rx="4" fill="#fff"/><ellipse cx="12" cy="14.500" rx="7" ry="7" fill="#111"/><ellipse cx="12" cy="8" rx="5" ry="6" fill="#111"/><ellipse cx="12" cy="15.500" rx="4.500" ry="5" fill="#fff"/><path d="M6 10c4 2 8 2 12 0l.8 2.500C15 15 9 15 6 12.500zM8 13l2 .5v4H8z" fill="#e5262a"/><ellipse cx="10.200" cy="6" rx="1.200" ry="1.700" fill="#fff"/><ellipse cx="13.800" cy="6" rx="1.200" ry="1.700" fill="#fff"/><path d="M9 9c2-1.200 4-1.200 6 0-2 1.600-4 1.600-6 0z" fill="#f5a31a"/><path d="M6 21.500c1-2 5-2 5.500 0zM12.500 21.500c1-2 5-2 5.500 0z" fill="#f5a31a"/></svg></button>
    <div class="tray">
      <button class="plain" aria-label="帮助"><svg class="s24" viewBox="0 0 24 24"><circle cx="11" cy="11" r="10.500" fill="#fff"/><circle cx="11" cy="11" r="9" fill="#1494d6"/><path d="M7.500 9c0-4.500 7-4.500 7-.5C14.500 11 11 11 11 14M11 16v2.500" fill="none" stroke="#fff" stroke-width="2.400"/><circle cx="18.500" cy="17.500" r="5.500" fill="#f3a81c"/><path d="M18.500 14.500v6" stroke="#fff" stroke-width="2"/></svg></button>
      <button class="plain day"><svg class="s24" viewBox="0 0 24 24"><rect x="1" y="3" width="22" height="20" rx="2" fill="url(#calPurple)"/><path d="M6 1v5M18 1v5" stroke="#c583f5" stroke-width="2.500"/><path d="M6 11h4v3H6zM14 11h4v3h-4zM6 16.500h4v3H6zM14 16.500h4v3h-4z" fill="#efd6ff"/></svg><span>星期五</span></button>
      <svg class="ic s12 up" viewBox="0 0 12 12"><path d="M1 9l5-5 5 5" stroke-width="1.400"/></svg>
      <svg class="ic s18 sync" viewBox="0 0 18 18"><path d="M1 4h4M1 4v11h5M5 3l11-2v14M8 6l5-1M8 6v3M13 5v2M8 9c1-2 4-2 5-1M8 12c1 1 4 1 5-1" stroke-width="1.300"/><circle cx="14" cy="14" r="4" fill="#ff9a1a" stroke="none"/></svg>
      <span class="ime">中</span>
      <div class="clock"><span>14:18</span><span>2025/8/29</span></div>
      <button class="plain msg" aria-label="通知"><svg class="s24" viewBox="0 0 24 24"><path d="M1 1h16v13H10l-4 3v-3H1z" fill="#000"/><path d="M4 5h10M4 8h10M4 11h7" stroke="#fff"/></svg><span>1</span></button>
      <i class="edge"></i>
    </div>
  </div>
</div>
</body>
</html>
```

FILE: styles.css
```css
* { box-sizing: border-box; }
body {
  margin: 0;
  font: 12px/16px "Open Sans", "Noto Sans CJK SC", sans-serif;
  color: #262626;
}
p, h1, h2, ol { margin: 0; padding: 0; }
button, input, select { font: inherit; color: inherit; }
button { border: 0; padding: 0; background: none; display: flex; align-items: center; justify-content: center; white-space: nowrap; }
a { color: inherit; text-decoration: none; }
.sprite { position: absolute; width: 0; height: 0; }
.ic { fill: none; stroke: currentColor; stroke-width: 1; flex: none; display: block; }
.s8 { width: 8px; height: 8px; }
.s10 { width: 10px; height: 10px; }
.s12 { width: 12px; height: 12px; }
.s14 { width: 14px; height: 14px; }
.s16 { width: 16px; height: 16px; }
.s18 { width: 18px; height: 18px; }
.s20 { width: 20px; height: 20px; }
.s24 { width: 24px; height: 24px; flex: none; }
.ai { width: 16px; height: 12px; }
.vsep { width: 1px; height: 16px; background: #c6c9cf; flex: none; }
.gray { color: #a8a8a8; }
.dark { color: #262626; }

.app {
  min-height: 100vh;
  display: flex;
  flex-direction: column;
  background:
    linear-gradient(to bottom, #e6e9f1 0, #e4e8ef 62%, #e4e8ef00 84%),
    linear-gradient(to right, #ece8dc 0, #ece8dc 22%, #e4e7da 45%, #e9e6e3 62%, #e6e7ea 80%, #dde6ee 100%);
}

/* title bar */
.titlebar { display: flex; align-items: center; height: 36px; padding: 5px 14px 1px 8px; }
.doc-tabs { display: flex; gap: 4px; }
.doc-tab { height: 30px; padding: 0 12px; gap: 6px; border-radius: 6px; background: #d9dce3; justify-content: flex-start; }
.doc-tab .ic { width: 16px; height: 18px; }
.doc-tab .s12 { width: 12px; height: 12px; }
.doc-tab .logo { width: 16px; height: 14px; }
.doc-tab.active { background: #fff; }
.tab-home { width: 112px; }
.tab-tpl { width: 128px; }
.tab-doc { width: 240px; }
.fade { width: 158px; overflow: hidden; text-align: left; mask-image: linear-gradient(to right, #000 88%, transparent); }
.fade.long { width: 194px; }
.mute { color: #888; }
.dot { width: 6px; height: 6px; border-radius: 50%; background: #888; margin-left: 8px; }
.new-tab { margin: 0 8px 0 9px; }
.win { display: flex; align-items: center; margin-left: auto; gap: 16px; }
.login { gap: 5px; color: #2159d6; }
.winbtn { width: 12px; margin-left: 12px; }
.login + .winbtn { margin-left: 17px; }

/* menu bar */
.menubar { display: flex; align-items: center; height: 39px; padding: 0 13px 0 20px; font-size: 13px; }
.quick { display: flex; align-items: center; width: 600px; }
.file { gap: 7px; font-size: 12px; width: 40px; margin-right: 12px; }
.burger { width: 10px; height: 12px; }
.quick .vsep { margin-right: 7px; height: 18px; }
.q { width: 26px; }
.undo { width: 40px; gap: 4px; margin-right: 2px; }
.redo { margin-right: 0; }
.quick .last { margin: 0 0 0 8px; }
.menu-tabs { display: flex; gap: 33px; }
.menu-tabs a { padding: 4px 0; border-bottom: 2px solid transparent; height: 26px; }
.menu-tabs .on { color: #c2500f; border-color: #c2500f; font-weight: 700; }
.vsep.a { margin: 0 18px 0 15px; }
.wpsai { gap: 4px; }
.vsep.b { margin: 0 12px 0 22px; height: 20px; }
.menu-right { margin-left: auto; display: flex; align-items: center; gap: 12px; }
.share { height: 24px; width: 56px; gap: 5px; border-radius: 4px; background: #e0671b; color: #fff; font-size: 12px; }

/* ribbon */
.ribbon { display: flex; height: 75px; margin: 0 13px 0 12px; padding: 3px 0 4px 254px; background: #fff; border-radius: 8px; box-shadow: 0 0 3px #9aa0a8; }
.grp { position: relative; padding: 5px 0 7px; border-right: 1px solid #d9d9d9; }
.g-clip, .g-play, .g-slide { display: flex; }
.g-clip { width: 128px; }
.g-play { width: 85px; justify-content: center; }
.g-slide { width: 277px; padding-left: 8px; gap: 2px; }
.g-font { width: 318px; padding-left: 6px; }
.g-para { width: 294px; padding-left: 5px; }
.g-draw { width: 209px; padding-left: 14px; display: grid; grid-template-columns: 82px 62px 40px; align-content: start; }
.g-find { border: 0; padding-left: 14px; }
.big { display: grid; grid-template-rows: 28px 28px; justify-items: center; align-items: center; align-self: start; }
.big span { display: flex; align-items: center; gap: 2px; }
.w48 { width: 48px; }
.w78 { width: 78px; }
.w42 { width: 42px; }
.w24 { width: 24px; }
.col { display: flex; flex-direction: column; }
.side { margin-left: 6px; }
.row { display: flex; align-items: center; height: 28px; }
.tool { width: 28px; height: 28px; }
.w24 .tool { width: 24px; }
.drop { width: 40px; height: 28px; padding: 0 4px; }
.drop > :first-child { margin: 0 4px; }
.lab { height: 28px; gap: 4px; justify-content: flex-start; }
.launcher { position: absolute; right: 3px; bottom: 0; }
.combo { display: flex; width: 214px; height: 24px; margin: 0 5px 0 2px; border: 1px solid #ebebeb; border-radius: 4px; background: #f7f7f7; overflow: hidden; }
.combo select {
  appearance: none; border: 0; border-right: 1px solid #ebebeb; opacity: 1;
  background-color: #f7f7f7;
  background-image: linear-gradient(45deg, transparent 44%, #c0c0c0 44% 58%, transparent 58%), linear-gradient(-45deg, transparent 44%, #c0c0c0 44% 58%, transparent 58%);
  background-position: right 10px center, right 5px center;
  background-size: 5px 5px;
  background-repeat: no-repeat;
}
.c-font { width: 153px; }
.combo .c-size { flex: 1; border: 0; }
.drop .pinyin { width: 24px; margin: 0; font-size: 9px; line-height: 10px; display: grid; justify-items: center; }
.pinyin b { font-size: 10px; line-height: 12px; font-weight: 500; }
.numbering { margin-right: 4px; }
.row .vsep { margin: 0 7px 0 8px; background: #d9d9d9; }
.conv { width: 32px; }

/* workspace */
.work { flex: 1; display: flex; min-height: 0; }
.outline { position: relative; width: 324px; border-right: 1px solid #c9ccd2; flex: none; display: flex; flex-direction: column; }
.outline-head { display: flex; height: 56px; padding: 12px 18px 0 121px; gap: 12px; }
.outline-head a { height: 25px; padding-top: 4px; }
.outline-head .on { color: #c2500f; background: linear-gradient(#c2500f, #c2500f) center bottom / 26px 2px no-repeat; }
.collapse { margin-left: auto; height: 24px; }
.thumbs { list-style: none; display: grid; gap: 16px; }
.thumbs li { display: flex; }
.num { width: 46px; padding: 4px 0 0 14px; display: flex; flex-direction: column; align-items: center; gap: 9px; font-size: 13px; }
.current .num { color: #c2500f; }
.current .num svg { color: #262626; }
.thumb { position: relative; width: 245px; height: 138px; background: #fff; border-radius: 2px; box-shadow: 0 1px 3px #0002; overflow: hidden; color: #000; }
.current .thumb { box-shadow: 0 0 0 2px #c2500f; }
.add { margin: 20px auto 0 155px; }
.bar { position: absolute; left: 311px; top: 291px; width: 6px; height: 34%; border-radius: 3px; background: #c9cbcf; }

/* miniature slides */
.thumb > * { position: absolute; white-space: nowrap; }
.t-head { left: 19px; top: 11px; font-size: 11px; }
.t-sub { left: 19px; top: 31px; font-size: 8px; }
.t-sub b, .t-foot b, .t-mid span, .red { color: #f00; }
.t-foot { left: 10px; top: 113px; font-size: 9px; }
.t-mid { left: 36px; top: 91px; font-size: 6px; }
.t-mid span { font-size: 8px; }
.t-score { left: 31px; top: 46px; width: 106px; border-collapse: collapse; table-layout: fixed; font-size: 5px; line-height: 5px; font-weight: 500; color: #333; }
.t-score th { font-weight: 400; }
.t-score td, .t-score th { padding: 0; height: 6px; border: 1px solid #ccc; border-width: 0 1px 1px 0; text-align: center; }
.t-score th:last-child { width: 29px; }
.t-score td:last-child { text-align: right; }
.t-cover { left: 54px; top: 53px; width: 50px; height: 57px; background: #fff; border: 1px solid #2e75b6; }
.t-rank { left: 4px; top: 0; font-size: 11px; font-weight: 500; line-height: 12px; }
.t-tab { border-collapse: collapse; table-layout: fixed; font-size: 5px; line-height: 6px; text-align: center; border: solid #111; border-width: 1px 0; }
.t-tab td, .t-tab th { padding: 0; }
.t-tab th { background: #ed7d31; color: #fff; border-bottom: 1px solid #111; }
.t-tab tr:nth-child(even) { background: #e7e7e7; }
.t-tab td:nth-child(even) { color: #4060c0; font-weight: 700; }
.t-tab.left { left: 24px; top: 7px; width: 67px; }
.t-tab.left tr { height: 11px; }
.t-tab.left tr:first-child { height: 8px; }
.t-tab.left tr:nth-child(n+9) { height: 10px; }
.t-tab.right { left: 108px; top: 7px; width: 103px; }
.t-tab.right tr { height: 9px; }
.t-tab.right .tall { height: 15px; }
.t-title { left: 11px; top: 4px; font-size: 10px; font-weight: 700; color: #f00; }
.t-names { left: 9px; top: 31px; width: 46px; height: 73px; padding-top: 2px; background: #ff0; text-align: center; font-size: 9px; line-height: 11px; font-weight: 700; }
.thumb .t-award { left: 67px; top: 47px; width: 150px; height: 46px; padding: 1px 2px; border: 1px solid #ed7d31; font-size: 6px; line-height: 7px; white-space: normal; }
.t-award b { display: block; }
.t-award p { text-indent: 2em; font-weight: 700; width: 140px; }
.t-dorm { left: 16px; width: 191px; height: 43px; padding: 2px 0 0 2px; border: 1px solid #ed7d31; font-size: 7px; line-height: 13px; }
.t-dorm.boys { top: 24px; }
.t-dorm.girls { top: 87px; }
.t-title.girls { left: 13px; top: 72px; }

/* slide canvas */
.editor { flex: 1; display: flex; flex-direction: column; min-width: 0; }
.stage { flex: 1; position: relative; padding: 12px 101px 24px 85px; }
.aibtn { width: 26px; height: 22px; margin: 0 0 14px 1px; border-radius: 3px; background: #fff; box-shadow: 0 0 2px #0003; }
.slide { position: relative; aspect-ratio: 1353 / 761; background: #fff; box-shadow: 0 0 2px #8b9096; color: #000; }
.slide h1 { position: absolute; left: 60px; top: 31px; font-size: 56px; line-height: 68px; font-weight: 900; color: #f00; }
.names { position: absolute; left: 50px; top: 176px; width: 252px; height: 405px; padding-top: 2px; background: #ff0; text-align: center; font-size: 51px; line-height: 61px; font-weight: 500; }
.award { position: absolute; left: 372px; top: 266px; width: 821px; height: 251px; padding: 7px 10px; border: 1px solid #ed7d31; font-size: 34px; line-height: 41px; }
.award h2 { font-size: 34px; line-height: 37px; font-weight: 900; }
.award p { text-indent: 2em; }
.vscroll { position: absolute; right: 3px; top: 4px; bottom: 8px; width: 10px; display: flex; flex-direction: column; align-items: center; }
.track { flex: 1; display: flex; flex-direction: column; padding-top: 384px; }
.track i { width: 8px; height: 54px; border-radius: 4px; background: #c9cbd0; }
.tri { width: 8px; height: 8px; fill: #666; display: block; }
.steps { display: grid; gap: 8px; }
.notes { border: 0; border-top: 1px solid #c6c8c8; background: none; height: 33px; padding: 0 12px 2px; font-size: 13px; width: 100%; }
.notes::placeholder { color: #808080; }

.rail { position: relative; width: 57px; border-left: 1px solid #c9ccd2; display: flex; flex-direction: column; align-items: center; flex: none; }
.dash { width: 14px; height: 2px; background: #8f9298; margin: 22px 0 21px; }
.rail button { flex-direction: column; height: 52px; gap: 3px; justify-content: flex-start; }
.thermo { position: absolute; right: 0; bottom: 2px; width: 12px; height: 56px; fill: none; }

/* status bar */
.status { display: flex; align-items: center; height: 24px; padding: 0 17px 2px 13px; border-top: 1px solid #c6c8c8; }
.status .lab { height: 20px; }
.pages, .th, .pr { font-size: 13px; }
.status .vsep { height: 14px; }
.pages { width: 82px; white-space: nowrap; }
.th { margin: 0 12px 0 14px; width: 84px; }
.pr { margin-left: 14px; }
.status-right { display: flex; align-items: center; margin-left: auto; }
.status-right > .vsep { margin: 0 14px; }
.status-right .com { margin-left: 20px; }
.status-right > .v2 { margin: 0 8px 0 14px; }
.view { width: 24px; height: 22px; border-radius: 3px; margin-right: 8px; }
.view.on { background: #cfd0d2; }
.status-right > .v3 { margin: 0 11px 0 0; }
.playbtn { width: 20px; height: 18px; background: #e0671b; border-radius: 2px; margin-right: 8px; }
.status-right > .v4 { margin: 0 14px 0 12px; }
.pct { margin: 0 9px 0 19px; width: 32px; }
.zb { margin: 0 12px 0 16px; }
#zoom { appearance: none; width: 106px; height: 14px; margin: 0; background: linear-gradient(to right, #2159d6 50%, #aeb1b6 50%) center / 100% 2px no-repeat; }
#zoom::-webkit-slider-thumb { appearance: none; width: 10px; height: 10px; border-radius: 50%; background: #888; border: 3px solid #fff; box-shadow: 0 0 2px #0006; }
#zoom + .zb { margin: 0 0 0 13px; }

/* taskbar */
.taskbar {
  display: flex; align-items: stretch; height: 40px; color: #111;
  background: linear-gradient(to right, #ecdcc8 0, #e8dfcb 21%, #d9dac6 33%, #dad9c2 50%, #d9d8da 54%, #dcdae2 58%, #ead5cf 62%, #e2dfe8 66%, #dadbe3 78%, #d8dfe8 86%, #cfe2e4 100%);
}
.start { width: 48px; }
.start svg { width: 16px; height: 16px; }
.searchbox { width: 288px; display: flex; align-items: center; gap: 12px; padding-left: 11px; background: #fff; border: 1px solid #c8c8c8; font-size: 14px; }
.searchbox .ic { width: 16px; height: 18px; }
.searchbox input { border: 0; padding: 0; width: 200px; background: none; }
.searchbox input::placeholder { color: #222; opacity: 1; }
.task { width: 49px; padding: 0 4px; border-bottom: 2px solid transparent; }
.task svg { width: 24px; height: 24px; }
.task.view-task svg { width: 18px; height: 18px; }
.view-task { width: 50px; }
.run { background: linear-gradient(#0078d7, #0078d7) center bottom / 40px 2px no-repeat; border: 0; padding-bottom: 2px; }
.here { background-color: #f3f2ec; background-size: 49px 2px; }
.tray { display: flex; align-items: center; margin-left: auto; padding-right: 3px; }
.day { gap: 8px; margin-left: 14px; }
.up { margin: 0 33px 0 223px; }
.ime { font-size: 15px; margin: 0 11px 0 5px; }
.clock { display: grid; justify-items: center; line-height: 18px; width: 66px; }
.msg { position: relative; margin: 0 14px 0 15px; }
.msg span { position: absolute; left: 8px; top: 10px; width: 16px; height: 16px; border-radius: 50%; background: #ccd2d6; border: 1px solid #777; line-height: 14px; font-size: 11px; }
.edge { width: 1px; height: 40px; background: #9aa8aa; }
```
